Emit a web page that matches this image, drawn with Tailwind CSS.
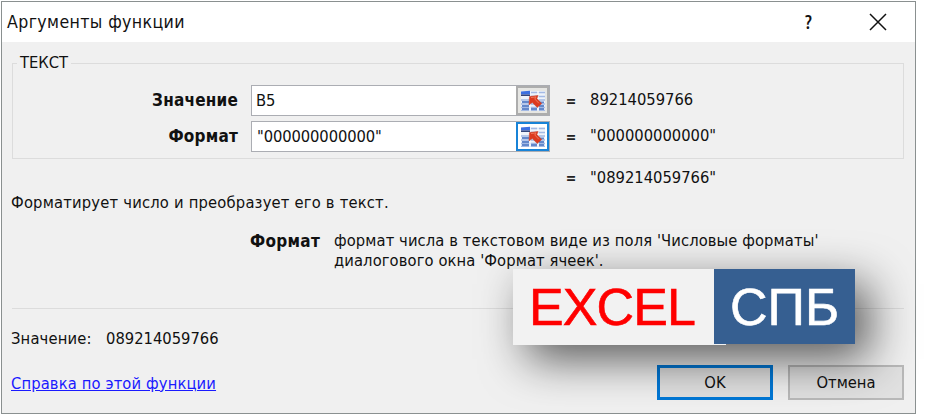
<!DOCTYPE html>
<html lang="ru">
  <head>
    <meta charset="UTF-8" />
    <meta name="viewport" content="width=device-width, initial-scale=1.0" />
    <title>Аргументы функции</title>
    <script src="https://cdn.jsdelivr.net/npm/@tailwindcss/browser@4"></script>
  </head>
  <body class="bg-white overflow-hidden">
    <!-- Range picker icon, shared by both argument fields -->
    <svg class="hidden">
      <symbol id="range-icon" viewBox="0 0 26 22">
        <rect x="1" y="1" width="24" height="20" fill="#eef3fb" />
        <path d="M11 2.5h14M11 6.5h14M1 10h24M1 14h24M1 17.5h24M1 20.3h24" stroke="#a3b9e4" stroke-width="1.3" />
        <path d="M2 12h7M2 16h7M2 19h7M11 19h6M19 12.3h5M19 16h5M19 19h5" stroke="#6488cb" stroke-width="1.8" />
        <path d="M1 1.5l9-.8v3.8H1z" fill="#3c6fe0" />
        <path d="M1 4.5h9V6H1z" fill="#33457a" />
        <path d="M10 8v13M18 1v20" stroke="#f8fafd" stroke-width="1.5" />
        <path d="M9.5 6.5l8.6-1-1.2 3 4.8 5-4.4 4-5-5-3.3 2.3z" fill="#dc3a20" stroke="#c23a22" stroke-width=".5" />
        <path d="M11 7.5l5-.6-1.2 2.1 4 4.2" fill="none" stroke="#f0775a" />
      </symbol>
    </svg>

    <div class="w-[916px] h-[414px] pl-px pt-px">
      <div class="relative w-[915px] h-[413px] flex flex-col border border-[#8a9090] bg-[#f0f0f0] font-['DejaVu_Sans_Condensed','DejaVu_Sans',sans-serif] font-stretch-condensed text-[16.4px] leading-5 text-[#111] whitespace-nowrap">
        <!-- Title bar -->
        <header class="h-10 shrink-0 bg-white flex items-center pl-[5px] pr-[28px]">
          <h1 class="grow text-[17.6px] tracking-[0.38px]">Аргументы функции</h1>
          <span class="w-[13px] mr-[54px] text-center text-[20px] font-semibold font-['Open_Sans',sans-serif]">?</span>
          <svg class="size-[18px]" viewBox="0 0 18 18" fill="none" stroke="#111" stroke-width="1.5">
            <path d="M1 1l16 16M17 1L1 17" />
          </svg>
        </header>

        <main class="grow flex flex-col pl-[10px] pr-[10px]">
          <!-- Arguments -->
          <fieldset class="mt-[10px] h-[107px] w-[892px] border border-[#dcdcdc] ml-0">
            <legend class="ml-[4px] px-[3px] h-[22px] leading-[22px]">ТЕКСТ</legend>
            <div class="flex items-center h-[31px] mt-[11px]">
              <label class="w-[225px] h-[22px] text-right font-bold text-[17px] tracking-[0.2px]">Значение</label>
              <div class="ml-[13px] w-[299px] h-[31px] flex border border-[#abadb3] bg-white">
                <span class="grow pl-[4px] pt-[5px]">B5</span>
                <button class="w-[33px] h-[29px] flex items-center justify-center border-2 border-[#adadad] bg-[#e6e6e3]"><svg class="w-[26px] h-[22px]"><use href="#range-icon" /></svg></button>
              </div>
              <span class="w-4 ml-[13px] text-center text-[#222] text-[14px] font-bold">=</span>
              <span class="ml-[11px] h-[22px]">89214059766</span>
            </div>
            <div class="flex items-center h-[31px] mt-[5px]">
              <label class="w-[225px] h-[22px] text-right font-bold text-[17px] tracking-[0.2px]">Формат</label>
              <div class="ml-[13px] w-[299px] h-[31px] flex border border-[#abadb3] bg-white">
                <span class="grow pl-[5px] pt-[5px] tracking-[-0.1px]">"000000000000"</span>
                <button class="w-[33px] h-[29px] flex items-center justify-center border-2 border-[#1883d7] bg-white"><svg class="w-[26px] h-[22px]"><use href="#range-icon" /></svg></button>
              </div>
              <span class="w-4 ml-[13px] text-center text-[#222] text-[14px] font-bold">=</span>
              <span class="ml-[11px] h-[22px]">"000000000000"</span>
            </div>
          </fieldset>

          <!-- Result and description -->
          <div class="flex mt-[9px] pl-[551px]">
            <span class="w-4 text-center text-[#222] text-[14px] font-bold">=</span>
            <span class="ml-[11px]">"089214059766"</span>
          </div>
          <p class="mt-[5px] -ml-px tracking-[0.2px]">Форматирует число и преобразует его в текст.</p>
          <div class="flex mt-[18px] pl-[238px]">
            <b class="w-[84px] text-[17px] tracking-[0.3px]">Формат</b>
            <p class="tracking-[0.1px]">формат числа в текстовом виде из поля 'Числовые форматы'<br />диалогового окна 'Формат ячеек'.</p>
          </div>
          <hr class="mt-[37px] border-[#dcdcdc] w-[892px]" />

          <div class="flex mt-[20px] -ml-px">
            <span class="w-[95px] tracking-[0.15px]">Значение:</span>
            <span>089214059766</span>
          </div>

          <!-- Footer -->
          <footer class="mt-4 flex items-center h-[35px]">
            <div class="grow -ml-px pt-[2px]">
              <a href="#" class="text-[#1a1aff] underline tracking-[0.13px]">Справка по этой функции</a>
            </div>
            <button class="w-[116px] h-[35px] border-[3px] border-[#0078d7] bg-[#e1e1e1]">OK</button>
            <button class="w-[116px] h-[35px] ml-[15px] mr-px border-2 border-[#b9b9b9] bg-[#e1e1e1]">Отмена</button>
          </footer>
        </main>

        <!-- Logo lying over the dialog -->
        <div class="absolute left-[511px] top-[267px] w-[342px] h-[75px] flex items-start font-['Liberation_Sans',Arial,sans-serif] text-[52px] leading-[76px] shadow-[14px_15px_46px_rgba(0,0,0,0.64)]">
          <div class="w-[201px] h-[76px] shrink-0 bg-[#f2f2f2] pl-4 text-[#f00] tracking-[-0.9px] [-webkit-text-stroke:0.6px_#f00]">EXCEL</div>
          <div class="w-[141px] h-[75px] bg-[#365f91] pl-4 text-white [-webkit-text-stroke:0.6px_#fff]">СПБ</div>
          <span class="absolute left-[201px] top-[75px] w-3 h-px bg-[#f2f2f2]"></span>
        </div>
      </div>
    </div>
  </body>
</html>
